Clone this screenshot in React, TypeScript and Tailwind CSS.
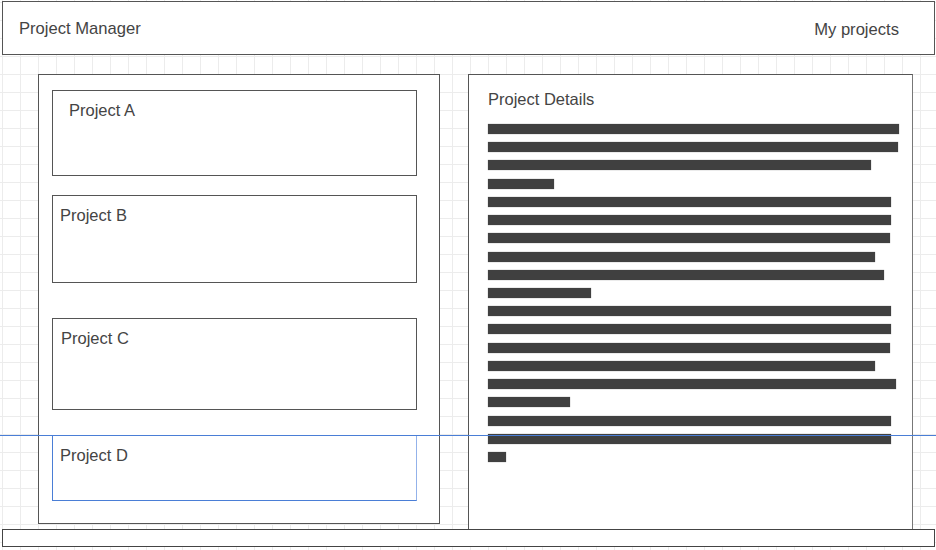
import React from "react";

const bars = [411, 410, 383, 66, 403, 403, 402, 387, 396, 103, 403, 403, 402, 387, 408, 82, 403, 403, 18];

export default function App() {
  return (
    <div className="relative w-[936px] h-[550px] overflow-hidden bg-white bg-[linear-gradient(to_right,#ececec_1px,transparent_1px),linear-gradient(to_bottom,#ececec_1px,transparent_1px)] bg-[size:18px_18px] bg-[position:2px_2px] font-['Liberation_Sans',Arial,sans-serif] text-[#444]">
      <header className="ml-[2px] mt-[1px] w-[933px] h-[54px] border border-[#555] bg-white flex items-center justify-between pl-[16px] pr-[35px]">
        <span className="text-[16.6px] leading-[19px]">Project Manager</span>
        <span className="text-[16.6px] leading-[19px] mt-[2px]">My projects</span>
      </header>

      <div className="flex items-start pl-[38px] pt-[19px] gap-[28px] h-[474px]">
        <section className="w-[402px] h-[450px] border border-[#555] bg-white pl-[13px] pt-[15px] flex flex-col">
          <div className="w-[365px] h-[86px] border border-[#555] pl-[16px] pt-[10px] text-[16.5px] leading-[19px]">Project A</div>
          <div className="w-[365px] h-[88px] mt-[19px] border border-[#555] pl-[7px] pt-[10px] text-[16.5px] leading-[19px]">Project B</div>
          <div className="w-[365px] h-[92px] mt-[35px] border border-[#555] pl-[8px] pt-[10px] text-[16.5px] leading-[19px]">Project C</div>
          <div className="w-[365px] h-[66px] mt-[25px] border border-[#4a7ed6] border-r-[#93b2ea] pl-[7px] pt-[10px] text-[16.5px] leading-[19px]">Project D</div>
        </section>

        <section className="w-[445px] h-[455px] border border-b-0 border-[#555] border-r-[#777] bg-white pl-[19px] pt-[15px] flex flex-col">
          <div className="text-[16.5px] leading-[19px]">Project Details</div>
          <div className="mt-[15px] flex flex-col gap-[8.22px]">
            {bars.map((w, i) => (
              <div key={i} className="h-[10px] bg-[#404040] shadow-[0_0_1px_#888]" style={{ width: w }} />
            ))}
          </div>
        </section>
      </div>

      <footer className="ml-[2px] w-[933px] h-[18px] border border-[#444] bg-white" />

      <div className="absolute left-0 top-[435px] w-full h-px bg-[#4a7ed6]" />
    </div>
  );
}
